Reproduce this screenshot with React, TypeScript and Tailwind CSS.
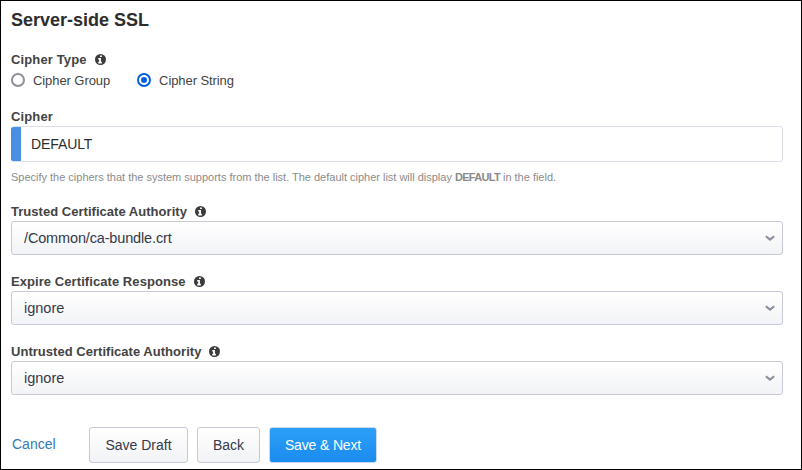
import type { ReactNode } from "react";

function InfoIcon() {
  return (
    <svg className="ml-2 size-[11px] shrink-0" viewBox="128 128 1536 1536">
      <circle cx="896" cy="896" r="768" fill="#3c3c3c" />
      <path
        fill="#fff"
        d="M1024 1376v-160q0-14-9-23t-23-9h-96v-512q0-14-9-23t-23-9h-320q-14 0-23 9t-9 23v160q0 14 9 23t23 9h96v320h-96q-14 0-23 9t-9 23v160q0 14 9 23t23 9h448q14 0 23-9t9-23zM1024 480v-160q0-14-9-23t-23-9h-192q-14 0-23 9t-9 23v160q0 14 9 23t23 9h192q14 0 23-9t9-23z"
        transform="translate(64 32)"
      />
    </svg>
  );
}

function Label({ children, info = false, tracking = "" }: { children: ReactNode; info?: boolean; tracking?: string }) {
  return (
    <div className="flex h-[19px] items-center text-[13px] font-bold text-[#434343]">
      <span className={`whitespace-nowrap ${tracking}`}>{children}</span>
      {info && <InfoIcon />}
    </div>
  );
}

function Radio({ label, checked = false }: { label: string; checked?: boolean }) {
  return (
    <label className="flex items-center gap-2 text-[13px] text-[#434343]">
      {checked ? (
        <span className="flex size-[14px] items-center justify-center rounded-full border-2 border-[#0060df] bg-white">
          <span className="size-[6px] rounded-full bg-[#0060df]" />
        </span>
      ) : (
        <span className="size-[14px] rounded-full border-2 border-[#8f8f9d] bg-white" />
      )}
      <span className="pt-px tracking-[-0.08px] whitespace-nowrap">{label}</span>
    </label>
  );
}

function Select({
  label,
  value,
  labelTracking = "",
  valueTracking = "",
}: {
  label: string;
  value: string;
  labelTracking?: string;
  valueTracking?: string;
}) {
  return (
    <div className="mb-[17px]">
      <Label info tracking={labelTracking}>
        {label}
      </Label>
      <div className="flex h-[34px] items-center justify-between rounded-[3px] border border-[#c9c9d6] bg-linear-to-b from-white to-[#f2f3f6] pr-[7px] pl-3 text-[14.5px] text-[#343a4a]">
        <span className={`pt-[2px] ${valueTracking}`}>{value}</span>
        <svg width="10" height="6" viewBox="0 0 10 6" fill="none" stroke="#8c8d98" strokeWidth="2">
          <path d="M.8 1.2 5 4.6 9.2 1.2" />
        </svg>
      </div>
    </div>
  );
}

export default function App() {
  return (
    <main className="h-[470px] w-[802px] overflow-hidden border border-black bg-white pt-[7px] pr-[18px] pl-[10px] font-['Liberation_Sans',Arial,sans-serif]">
      <h1 className="h-6 text-[18px] leading-6 font-bold text-[#2d2d2d]">Server-side SSL</h1>

      <section className="mt-[18px]">
        <Label info tracking="tracking-[0.13px]">
          Cipher Type
        </Label>
        <div className="mt-px flex h-5 items-center gap-[27px]">
          <Radio label="Cipher Group" />
          <Radio label="Cipher String" checked />
        </div>
      </section>

      <section className="mt-[17px]">
        <Label tracking="tracking-[0.13px]">Cipher</Label>
        <div className="flex h-9 items-center overflow-hidden rounded-[3px] border border-l-0 border-[#dfdfe8] text-[14px] text-[#2d2d2d]">
          <span className="-my-px mr-[10px] w-[10px] self-stretch bg-[#4a90e2]" />
          <span className="tracking-[-0.1px]">DEFAULT</span>
        </div>
        <p className="mt-[6px] h-[18px] text-[11px] leading-[18px] tracking-[-0.01px] text-[#8b8b8b]">
          Specify the ciphers that the system supports from the list. The default cipher list will display{" "}
          <b className="tracking-[-0.7px]">DEFAULT</b> in the field.
        </p>
      </section>

      <section className="mt-4">
        <Select
          label="Trusted Certificate Authority"
          value="/Common/ca-bundle.crt"
          labelTracking="tracking-[0.03px]"
          valueTracking="tracking-[-0.15px]"
        />
        <Select label="Expire Certificate Response" value="ignore" labelTracking="tracking-[0.07px]" />
        <Select label="Untrusted Certificate Authority" value="ignore" labelTracking="tracking-[0.03px]" />
      </section>

      <footer className="mt-[32px] flex h-9 items-center text-[14px]">
        <a className="mb-[2px] ml-px w-[77px] text-[#337ab7]">Cancel</a>
        <button className="h-9 w-[99px] rounded-[3px] border border-[#c9c9d6] bg-linear-to-b from-white to-[#f2f3f6] whitespace-nowrap text-[#343a4a]">
          Save Draft
        </button>
        <button className="ml-[9px] h-9 w-[63px] rounded-[3px] border border-[#c9c9d6] bg-linear-to-b from-white to-[#f2f3f6] text-[#343a4a]">
          Back
        </button>
        <button className="ml-[9px] h-9 w-[108px] rounded-[3px] border border-[#c9d9ee] bg-linear-to-b from-[#2c9ff8] to-[#198cee] tracking-[-0.15px] whitespace-nowrap text-white">
          Save &amp; Next
        </button>
      </footer>
    </main>
  );
}
